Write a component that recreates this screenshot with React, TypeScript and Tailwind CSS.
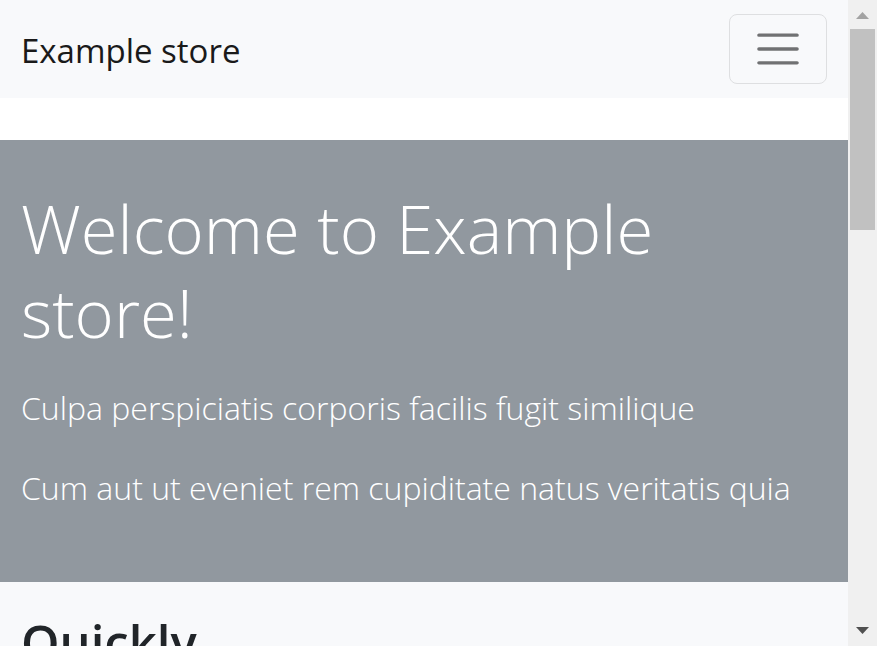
import React from "react";

function Navbar() {
  return (
    <nav className="flex items-center justify-between bg-[#f8f9fb] px-[21px] py-3.5">
      <a href="#home" className="pt-1 text-[33px] leading-[52px] text-[#1a1a1a]">
        Example store
      </a>
      <button
        type="button"
        aria-label="Toggle navigation"
        className="flex h-[70px] w-[98px] items-center justify-center rounded-lg border border-[#dedfe1]"
      >
        <svg viewBox="0 0 30 30" className="size-[52px]" fill="none" stroke="#707173" strokeWidth="2" strokeLinecap="round">
          <path d="M4 7h22M4 15h22M4 23h22" />
        </svg>
      </button>
    </nav>
  );
}

function Scrollbar() {
  return (
    <div className="flex w-[29px] shrink-0 flex-col items-center bg-[#f0f0f0]">
      <button type="button" aria-label="Scroll up" className="flex h-[29px] w-full items-center justify-center pt-0.5">
        <svg viewBox="0 0 13 7" className="h-[7px] w-[13px]" fill="#a3a3a3">
          <path d="M0 7L6.5 0L13 7Z" />
        </svg>
      </button>
      <div className="h-[201px] w-[25px] bg-[#c1c1c1]" />
      <button type="button" aria-label="Scroll down" className="mt-auto flex h-[31px] w-full items-center justify-center">
        <svg viewBox="0 0 13 7" className="h-[7px] w-[13px]" fill="#505050">
          <path d="M0 0L6.5 7L13 0Z" />
        </svg>
      </button>
    </div>
  );
}

export default function App() {
  return (
    <div className="flex h-screen overflow-hidden bg-white font-['Open_Sans',sans-serif]">
      <div className="min-w-0 flex-1 overflow-hidden">
        <Navbar />
        <main className="pt-[42px]">
          <header className="bg-[#91989f] px-[21px] pt-[46px] pb-[68px] font-light text-white">
            <h1 className="text-[67px] leading-[84px]">Welcome to Example store!</h1>
            <p className="mt-7 text-[32px] leading-[52px]">Culpa perspiciatis corporis facilis fugit similique</p>
            <p className="mt-7 text-[32px] leading-[52px]">Cum aut ut eveniet rem cupiditate natus veritatis quia</p>
          </header>
          <section className="bg-[#f8f9fb] px-[21px] py-7">
            <h2 className="text-[49px] leading-[64px] font-semibold text-[#212529]">Quickly</h2>
          </section>
        </main>
      </div>
      <Scrollbar />
    </div>
  );
}
